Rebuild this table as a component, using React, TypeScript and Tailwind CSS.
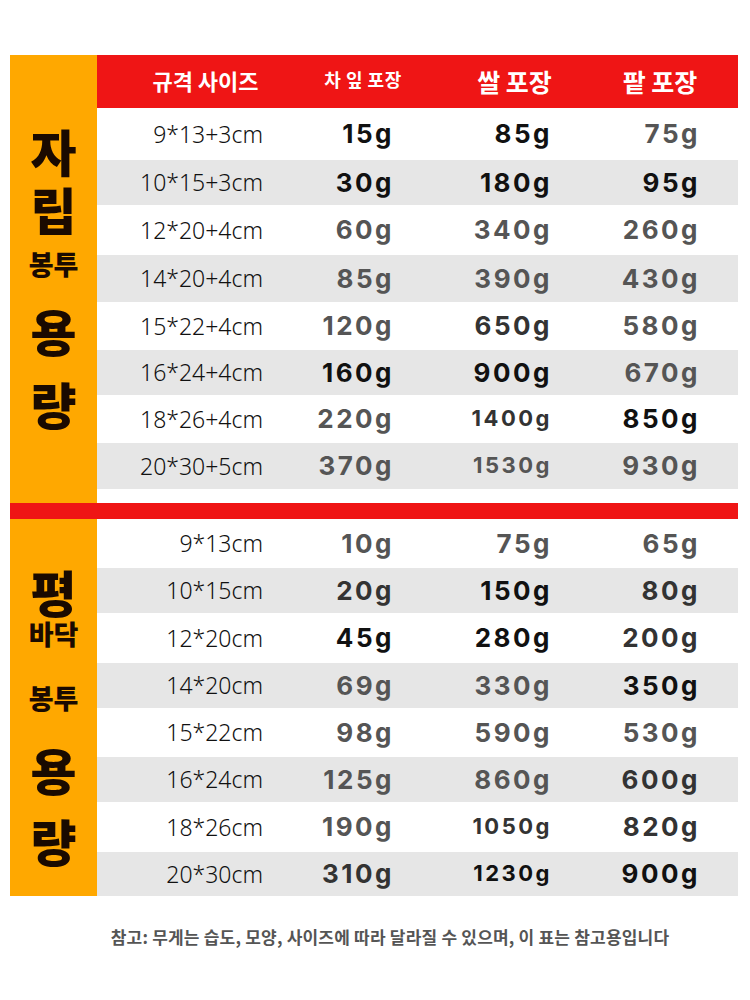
import React from 'react'

type Tone = 'k' | 'd' | 'g'
type Row = { size: string; h: string; gray: boolean; vals: [string, Tone][] }

const tone: Record<Tone, string> = {
  k: 'text-[#111111]',
  d: 'text-[#333333]',
  g: 'text-[#555555]',
}

// 자립봉투
const standUp: Row[] = [
  { size: '9*13+3cm', h: 'h-[52px]', gray: false, vals: [['15g', 'k'], ['85g', 'k'], ['75g', 'g']] },
  { size: '10*15+3cm', h: 'h-[45px]', gray: true, vals: [['30g', 'k'], ['180g', 'k'], ['95g', 'k']] },
  { size: '12*20+4cm', h: 'h-[50px]', gray: false, vals: [['60g', 'g'], ['340g', 'g'], ['260g', 'g']] },
  { size: '14*20+4cm', h: 'h-[47px]', gray: true, vals: [['85g', 'g'], ['390g', 'g'], ['430g', 'g']] },
  { size: '15*22+4cm', h: 'h-[48px]', gray: false, vals: [['120g', 'g'], ['650g', 'd'], ['580g', 'g']] },
  { size: '16*24+4cm', h: 'h-[45px]', gray: true, vals: [['160g', 'k'], ['900g', 'k'], ['670g', 'g']] },
  { size: '18*26+4cm', h: 'h-[48px]', gray: false, vals: [['220g', 'g'], ['1400g', 'd'], ['850g', 'k']] },
  { size: '20*30+5cm', h: 'h-[46px]', gray: true, vals: [['370g', 'g'], ['1530g', 'g'], ['930g', 'g']] },
]

// 평바닥봉투
const flat: Row[] = [
  { size: '9*13cm', h: 'h-[49px]', gray: false, vals: [['10g', 'g'], ['75g', 'g'], ['65g', 'g']] },
  { size: '10*15cm', h: 'h-[45px]', gray: true, vals: [['20g', 'd'], ['150g', 'k'], ['80g', 'd']] },
  { size: '12*20cm', h: 'h-[50px]', gray: false, vals: [['45g', 'k'], ['280g', 'k'], ['200g', 'd']] },
  { size: '14*20cm', h: 'h-[45px]', gray: true, vals: [['69g', 'g'], ['330g', 'g'], ['350g', 'k']] },
  { size: '15*22cm', h: 'h-[49px]', gray: false, vals: [['98g', 'g'], ['590g', 'g'], ['530g', 'g']] },
  { size: '16*24cm', h: 'h-[45px]', gray: true, vals: [['125g', 'g'], ['860g', 'g'], ['600g', 'd']] },
  { size: '18*26cm', h: 'h-[50px]', gray: false, vals: [['190g', 'g'], ['1050g', 'd'], ['820g', 'd']] },
  { size: '20*30cm', h: 'h-[44px]', gray: true, vals: [['310g', 'd'], ['1230g', 'k'], ['900g', 'k']] },
]

const valuePad = ['pr-[16px]', 'pr-[13px]', 'pr-[38px]']

function TableRow({ row }: { row: Row }) {
  return (
    <div
      className={`grid grid-cols-[183px_130px_155px_173px] items-center ${row.h} ${
        row.gray ? 'bg-[#e6e6e6]' : 'bg-white'
      }`}
    >
      <span className="pr-[17px] text-right font-['Noto_Sans','Liberation_Sans',sans-serif] text-[23px] font-light leading-none text-[#111]">
        {row.size}
      </span>
      {row.vals.map(([v, t], i) => (
        <span
          key={i}
          className={`${valuePad[i]} text-right font-['Inter','Liberation_Sans',sans-serif] font-bold leading-none ${tone[t]} ${
            v.length > 4 ? 'text-[22px] tracking-[2.5px] -mt-[3px]' : 'text-[26px] tracking-[2.5px]'
          }`}
        >
          {v}
        </span>
      ))}
    </div>
  )
}

const big = 'h-[50px] text-[50px] leading-[50px] font-black'
const small = 'h-[30px] text-[27px] leading-[30px] font-black'

export default function App() {
  return (
    <div className="h-[1000px] w-[750px] bg-white pl-[10px] pt-[55px] font-['Noto_Sans_CJK_KR',sans-serif]">
      <div className="w-[728px]">
        {/* 자립봉투 */}
        <div className="flex">
          <div className="flex w-[87px] flex-col items-center bg-[#ffa800] text-[#1a0a00]">
            <span className={`${big} mt-[70px]`}>자</span>
            <span className={`${big} mt-[8px]`}>립</span>
            <span className={`${small} mt-[16px]`}>봉투</span>
            <span className={`${big} mt-[26px]`}>용</span>
            <span className={`${big} mt-[23px]`}>량</span>
          </div>
          <div className="w-[641px]">
            <div className="grid h-[53px] grid-cols-[183px_130px_155px_173px] items-center bg-[#ef1515] font-bold text-white">
              <span className="-mt-[3px] pl-[34px] text-center text-[22px]">규격 사이즈</span>
              <span className="-mt-[5px] pl-[36px] text-center text-[18px] tracking-[0.5px]">차 잎 포장</span>
              <span className="pl-[54px] text-center text-[25px]">쌀 포장</span>
              <span className="pl-[17px] text-center text-[25px]">팥 포장</span>
            </div>
            {standUp.map((r) => (
              <TableRow key={r.size} row={r} />
            ))}
            <div className="h-[14px] bg-white" />
          </div>
        </div>

        <div className="h-[16px] bg-[#ef1515]" />

        {/* 평바닥봉투 */}
        <div className="flex">
          <div className="flex w-[87px] flex-col items-center bg-[#ffa800] text-[#1a0a00]">
            <span className={`${big} mt-[47px]`}>평</span>
            <span className={`${small} mt-[3px]`}>바닥</span>
            <span className={`${small} mt-[34px]`}>봉투</span>
            <span className={`${big} mt-[31px]`}>용</span>
            <span className={`${big} mt-[21px]`}>량</span>
          </div>
          <div className="w-[641px]">
            {flat.map((r) => (
              <TableRow key={r.size} row={r} />
            ))}
          </div>
        </div>

        <p className="mt-[29px] pl-[32px] text-center text-[17px] font-bold leading-[24px] tracking-[0.2px] text-[#555]">
          참고: 무게는 습도, 모양, 사이즈에 따라 달라질 수 있으며, 이 표는 참고용입니다
        </p>
      </div>
    </div>
  )
}
